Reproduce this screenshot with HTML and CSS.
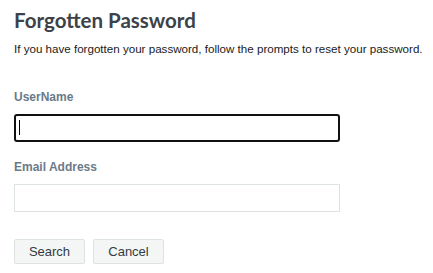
FILE: index.html
```html
<!DOCTYPE html>
<html lang="en">
<head>
    <meta charset="UTF-8">
    <meta name="viewport" content="width=device-width, initial-scale=1.0">
    <title>Forgotten Password</title>
    <link rel="stylesheet" href="styles.css">
</head>
<body>
    <div class="container">
        <h2>Forgotten Password</h2>
        <p class="intro">If you have forgotten your password, follow the prompts to reset your password.</p>
        <form id="forgotForm" onsubmit="event.preventDefault()">
            <div class="form-group">
                <label for="username">UserName</label>
                <div class="field">
                    <input type="text" id="username" name="username" class="focused" autofocus>
                    <span class="caret"></span>
                </div>
            </div>
            <div class="form-group">
                <label for="email">Email Address</label>
                <input type="email" id="email" name="email">
            </div>
            <div class="actions">
                <button type="submit">Search</button>
                <button type="button">Cancel</button>
            </div>
        </form>
    </div>
</body>
</html>
```
FILE: styles.css
```css
body {
    font-family: "Liberation Sans", Arial, sans-serif;
    margin: 0;
    background-color: #fff;
}

.container {
    padding: 8px 0 8px 14px;
}

h2 {
    font-family: Lato, "Open Sans", sans-serif;
    font-size: 20.5px;
    font-weight: bold;
    color: #3c4248;
    margin: 0;
    line-height: 24px;
}

.intro {
    font-size: 11.6px;
    color: #1a1a1a;
    margin: 10px 0 0;
    line-height: 14px;
    white-space: nowrap;
}

form {
    margin-top: 34px;
}

.form-group {
    margin-bottom: 18px;
}

label {
    display: block;
    font-size: 12px;
    font-weight: bold;
    color: #6b7a88;
    line-height: 14px;
    margin-bottom: 10px;
}

.field {
    position: relative;
    width: 326px;
}

.caret {
    position: absolute;
    left: 5px;
    top: 6px;
    width: 1px;
    height: 15px;
    background-color: #000;
}

input {
    display: block;
    width: 326px;
    height: 28px;
    padding: 0 5px;
    border: 1px solid #dde2e2;
    border-radius: 0;
    box-sizing: border-box;
    font-size: 12px;
    font-family: inherit;
    caret-color: transparent;
    outline: none;
}

input.focused,
input:focus {
    border: 2px solid #111;
    border-radius: 3px;
}

.actions {
    display: flex;
    gap: 8px;
    margin-top: 27px;
}

button {
    width: 71px;
    height: 25px;
    background-color: #f4f6f6;
    border: 1px solid #dde2e2;
    border-radius: 2px;
    color: #333b42;
    font-family: inherit;
    font-size: 13px;
    padding: 0;
    cursor: pointer;
}

button:hover {
    background-color: #e8ecec;
}
```
